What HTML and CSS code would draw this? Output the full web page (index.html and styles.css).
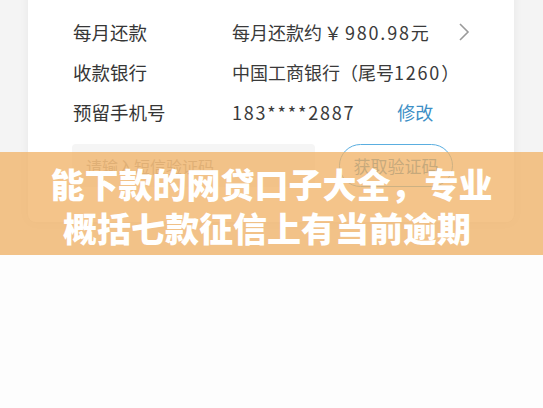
FILE: index.html
```html
<!DOCTYPE html>
<html lang="zh-CN">
<head>
<meta charset="utf-8">
<title>能下款的网贷口子大全</title>
<link rel="stylesheet" href="styles.css">
</head>
<body>
<div class="hero">
  <div class="shot">
    <div class="card">
      <div class="row row-cut"><span class="label">借款期限</span><span class="value"><span class="num">12</span>期</span></div>
      <div class="row"><span class="label">每月还款</span><span class="value spread"><span>每月还款约<span class="yen">￥</span><span class="num">980.98</span>元</span><svg class="chev" width="12" height="20" viewBox="0 0 12 20"><polyline points="2,2 10,10 2,18" fill="none" stroke="#9a9a9a" stroke-width="1.6"/></svg></span></div>
      <div class="row"><span class="label">收款银行</span><span class="value">中国工商银行（尾号<span class="num">1260</span>）</span></div>
      <div class="row"><span class="label">预留手机号</span><span class="value"><span class="num">183****2887</span><span class="link">修改</span></span></div>
      <div class="verify">
        <div class="input">请输入短信验证码</div>
        <div class="btn">获取验证码</div>
      </div>
    </div>
  </div>
  <div class="band">
    <h1 class="title">能下款的网贷口子大全，专业<br><span class="line2">概括七款征信上有当前逾期</span></h1>
  </div>
</div>
<div class="rest"></div>
</body>
</html>
```
FILE: styles.css
```css
html, body {
  margin: 0;
  padding: 0;
}
body {
  background: #fdfdfd;
  font-family: "Noto Sans CJK SC", "Noto Sans", sans-serif;
  width: 543px;
  height: 408px;
  overflow: hidden;
}
.hero {
  position: relative;
  height: 255px;
  overflow: hidden;
  background: #f4f4f4;
}
.shot {
  margin-top: -40px;
  padding-left: 28px;
}
.card {
  width: 486px;
  box-sizing: border-box;
  background: #fff;
  border-radius: 8px;
  box-shadow: 0 0 10px rgba(0, 0, 0, 0.06);
  padding: 12px 44px 35px 45px;
}
.row {
  display: grid;
  grid-template-columns: 159px 1fr;
  align-items: center;
  height: 40px;
  color: #363636;
}
.row-cut {
  align-items: end;
  box-sizing: border-box;
  padding-bottom: 10px;
}
.label {
  font-size: 18.5px;
}
.value {
  display: flex;
  align-items: center;
  font-size: 18px;
  color: #3a3a3a;
}
.num {
  letter-spacing: 1.8px;
}
.yen {
  margin: 0 3px 0 2px;
}
.spread {
  justify-content: space-between;
}
.chev {
  display: block;
}
.link {
  color: #3d8fc6;
  margin-left: 42px;
}
.verify {
  display: flex;
  align-items: center;
  margin-top: 12px;
  margin-left: -1px;
}
.input {
  width: 243px;
  height: 43px;
  box-sizing: border-box;
  background: #f5f5f5;
  border-radius: 4px;
  padding-left: 14px;
  display: flex;
  align-items: center;
  font-size: 16px;
  color: #a9a9a9;
}
.btn {
  margin-left: 24px;
  width: 114px;
  height: 43px;
  box-sizing: border-box;
  border: 1.5px solid #5aaee0;
  border-radius: 22px;
  display: flex;
  align-items: center;
  justify-content: center;
  font-size: 17px;
  color: #3f8fc4;
}
.band {
  position: absolute;
  left: 0;
  right: 0;
  top: 152px;
  height: 103px;
  background: rgba(241, 178, 101, 0.76);
  box-sizing: border-box;
  padding-top: 10px;
}
.title {
  margin: 0;
  text-align: center;
  color: #fff;
  font-size: 34px;
  line-height: 44px;
  font-weight: 900;
}
.line2 {
  padding-right: 9px;
}
.rest {
  height: 153px;
  background: #fdfdfd;
}
```
